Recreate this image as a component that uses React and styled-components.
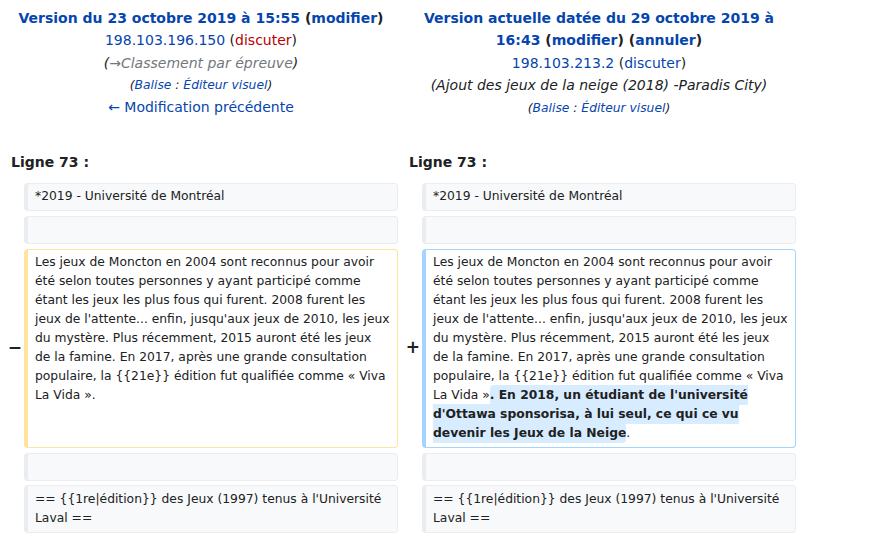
import React from 'react';
import styled, { createGlobalStyle } from 'styled-components';

const GlobalStyle = createGlobalStyle`
  html, body {
    margin: 0;
    padding: 0;
    background: #ffffff;
  }
  body {
    font-family: "DejaVu Sans", sans-serif;
    font-size: 14px;
    color: #202122;
  }
`;

const DiffGrid = styled.div`
  display: grid;
  grid-template-columns: 16px 374px 16px 374px;
  column-gap: 4px;
  row-gap: 4.6px;
  width: 796px;
  padding: 7px 0 0 4px;
`;

const HeaderCell = styled.div`
  grid-column: span 2;
  text-align: center;
  line-height: 22.4px;
`;

const Line = styled.div``;

const TagLine = styled.div`
  font-size: 12.3px;
  line-height: 21px;
  font-style: italic;
  padding-top: 1px;
`;

const Title = styled.div`
  font-weight: bold;
`;

const Link = styled.a`
  color: ${(p) => (p.$red ? '#ba0000' : '#0645ad')};
  text-decoration: none;
  cursor: pointer;
`;

const Comment = styled.span`
  font-style: italic;
  color: #202122;
`;

const AutoComment = styled.span`
  color: #72777d;
`;

const LineNo = styled.div`
  grid-column: span 2;
  font-weight: bold;
  line-height: 22.4px;
  padding: 28px 7px 4.4px;
`;

const Marker = styled.div`
  align-self: center;
  text-align: right;
  font-weight: bold;
  font-size: 17px;
  line-height: 20px;
  margin: -3px -2px 0 0;
`;

const boxColors = {
  context: { bg: '#f8f9fa', border: '#eaecf0' },
  deleted: { bg: '#ffffff', border: '#ffe49c' },
  added: { bg: '#ffffff', border: '#a3d3ff' },
};

const Box = styled.div`
  background: ${(p) => boxColors[p.$kind].bg};
  border: 1px solid ${(p) => boxColors[p.$kind].border};
  border-left-width: 4px;
  border-radius: 4px;
  padding: 3.7px 6.5px 3.7px 7px;
  font-size: 12.32px;
  line-height: 19px;
  min-height: 19px;
  word-wrap: break-word;
`;

const Ins = styled.span`
  background: #d8ecff;
  font-weight: bold;
  border-radius: 4px;
  padding: 0.25em 0;
`;

const base =
  "Les jeux de Moncton en 2004 sont reconnus pour avoir été selon toutes personnes y ayant participé comme étant les jeux les plus fous qui furent. 2008 furent les jeux de l'attente... enfin, jusqu'aux jeux de 2010, les jeux du mystère. Plus récemment, 2015 auront été les jeux de la famine. En 2017, après une grande consultation populaire, la {{21e}} édition fut qualifiée comme « Viva La Vida »";

export default function App() {
  return (
    <>
      <GlobalStyle />
      <DiffGrid>
        <HeaderCell>
          <Title>
            <Link>Version du 23 octobre 2019 à 15:55</Link> (<Link>modifier</Link>)
          </Title>
          <Line>
            <Link>198.103.196.150</Link> (<Link $red>discuter</Link>)
          </Line>
          <Line>
            <Comment>
              (<AutoComment>→Classement par épreuve</AutoComment>)
            </Comment>
          </Line>
          <TagLine>
            (<Link>Balise</Link> : <Link>Éditeur visuel</Link>)
          </TagLine>
          <Line>
            <Link>← Modification précédente</Link>
          </Line>
        </HeaderCell>
        <HeaderCell>
          <Title>
            <Link>Version actuelle datée du 29 octobre 2019 à 16:43</Link> (
            <Link>modifier</Link>) (<Link>annuler</Link>)
          </Title>
          <Line>
            <Link>198.103.213.2</Link> (<Link>discuter</Link>)
          </Line>
          <Line>
            <Comment>(Ajout des jeux de la neige (2018) -Paradis City)</Comment>
          </Line>
          <TagLine>
            (<Link>Balise</Link> : <Link>Éditeur visuel</Link>)
          </TagLine>
        </HeaderCell>

        <LineNo>Ligne 73 :</LineNo>
        <LineNo>Ligne 73 :</LineNo>

        <Marker />
        <Box $kind="context">*2019 - Université de Montréal</Box>
        <Marker />
        <Box $kind="context">*2019 - Université de Montréal</Box>

        <Marker />
        <Box $kind="context" />
        <Marker />
        <Box $kind="context" />

        <Marker>−</Marker>
        <Box $kind="deleted">{base}.</Box>
        <Marker>+</Marker>
        <Box $kind="added">
          {base}
          <Ins>. En 2018, un étudiant de l'université d'Ottawa sponsorisa, à lui seul, ce qui ce vu devenir les Jeux de la Neige</Ins>.
        </Box>

        <Marker />
        <Box $kind="context" />
        <Marker />
        <Box $kind="context" />

        <Marker />
        <Box $kind="context">== {'{{1re|édition}}'} des Jeux (1997) tenus à l'Université Laval ==</Box>
        <Marker />
        <Box $kind="context">== {'{{1re|édition}}'} des Jeux (1997) tenus à l'Université Laval ==</Box>
      </DiffGrid>
    </>
  );
}
